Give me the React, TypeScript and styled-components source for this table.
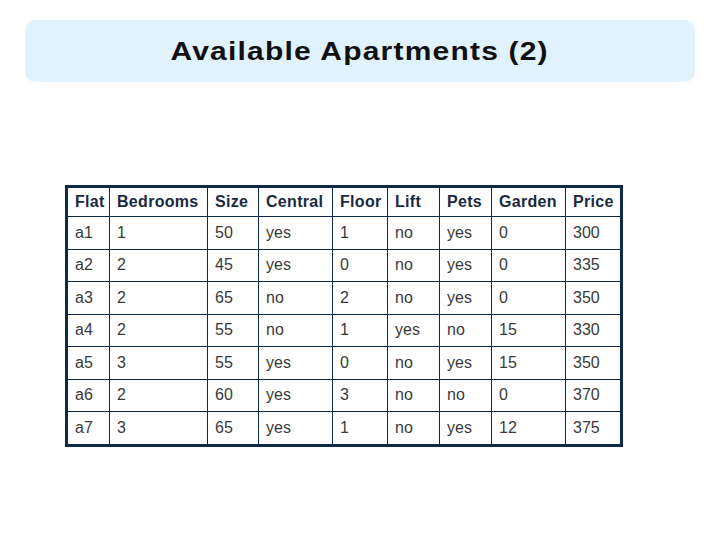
import styled, { createGlobalStyle } from 'styled-components';

const GlobalStyle = createGlobalStyle`
    body {
        margin: 0;
        background: #ffffff;
        font-family: "Liberation Sans", Arial, sans-serif;
    }
`;

const Page = styled.div`
    width: 720px;
    height: 540px;
    padding: 20px 25px 0 25px;
    box-sizing: border-box;
    display: flex;
    flex-direction: column;
`;

const TitleBox = styled.div`
    height: 62px;
    border-radius: 10px;
    background: #e0f2fd;
    display: flex;
    align-items: center;
    justify-content: center;
`;

const Title = styled.h1`
    margin: 0;
    font-size: 25px;
    font-weight: 700;
    letter-spacing: 1px;
    color: #111111;
    transform: scaleX(1.2);
`;

const Table = styled.table`
    margin: 103px 0 0 40px;
    border-collapse: collapse;
    table-layout: fixed;
    width: 555px;
    border: 3px solid #0d2a46;
`;

const HeadCell = styled.th`
    border: 1px solid #0d2a46;
    height: 28px;
    padding: 0 0 0 7px;
    text-align: left;
    font-size: 16px;
    font-weight: 700;
    color: #1b2a3f;
    letter-spacing: 0.3px;
`;

const Cell = styled.td`
    border: 1px solid #0d2a46;
    height: 31.5px;
    padding: 0 0 0 7px;
    font-size: 16px;
    color: #3a3a3a;
`;

const columns = [
    { name: 'Flat', width: 43 },
    { name: 'Bedrooms', width: 98 },
    { name: 'Size', width: 51 },
    { name: 'Central', width: 74 },
    { name: 'Floor', width: 55 },
    { name: 'Lift', width: 52 },
    { name: 'Pets', width: 52 },
    { name: 'Garden', width: 74 },
    { name: 'Price', width: 56 },
];

const rows = [
    ['a1', '1', '50', 'yes', '1', 'no', 'yes', '0', '300'],
    ['a2', '2', '45', 'yes', '0', 'no', 'yes', '0', '335'],
    ['a3', '2', '65', 'no', '2', 'no', 'yes', '0', '350'],
    ['a4', '2', '55', 'no', '1', 'yes', 'no', '15', '330'],
    ['a5', '3', '55', 'yes', '0', 'no', 'yes', '15', '350'],
    ['a6', '2', '60', 'yes', '3', 'no', 'no', '0', '370'],
    ['a7', '3', '65', 'yes', '1', 'no', 'yes', '12', '375'],
];

const App = () => {
    return (
        <Page>
            <GlobalStyle />
            <TitleBox>
                <Title>Available Apartments (2)</Title>
            </TitleBox>
            <Table>
                <colgroup>
                    {columns.map((c) => (
                        <col key={c.name} style={{ width: c.width }} />
                    ))}
                </colgroup>
                <thead>
                    <tr>
                        {columns.map((c) => (
                            <HeadCell key={c.name}>{c.name}</HeadCell>
                        ))}
                    </tr>
                </thead>
                <tbody>
                    {rows.map((r) => (
                        <tr key={r[0]}>
                            {r.map((v, i) => (
                                <Cell key={i}>{v}</Cell>
                            ))}
                        </tr>
                    ))}
                </tbody>
            </Table>
        </Page>
    );
};

export default App;
